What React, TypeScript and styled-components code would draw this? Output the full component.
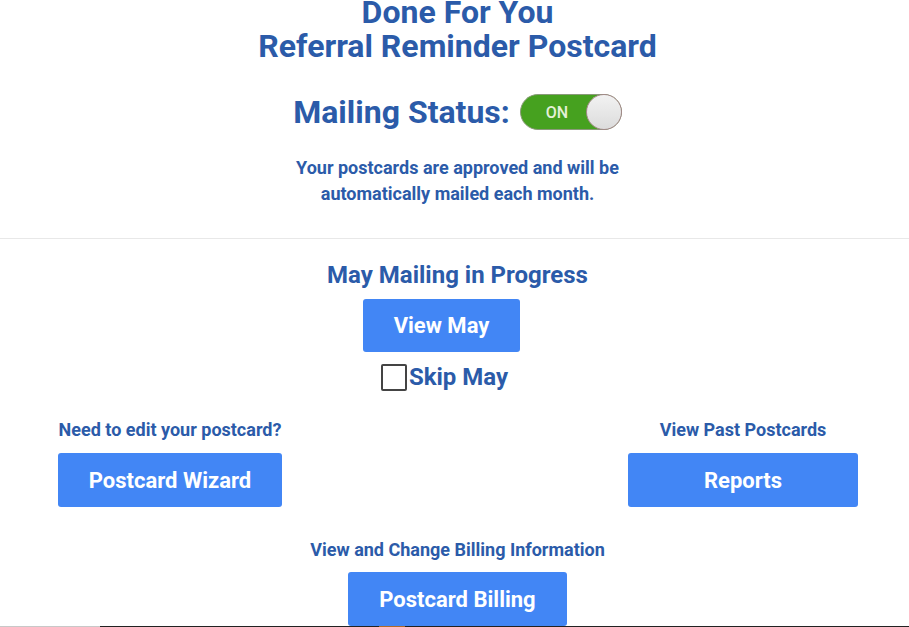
import styled, { createGlobalStyle } from "styled-components";

const GlobalStyle = createGlobalStyle`
  html, body {
    margin: 0;
    padding: 0;
    background: #ffffff;
  }
  body {
    font-family: Roboto, "Liberation Sans", Arial, sans-serif;
    overflow: hidden;
  }
`;

const Page = styled.div`
  width: 909px;
  height: 627px;
  display: flex;
  flex-direction: column;
  overflow: hidden;
  color: #2b5ba9;
`;

const Header = styled.div`
  display: flex;
  flex-direction: column;
  align-items: center;
  padding-left: 6px;
`;

const Title = styled.h1`
  margin: -5px 0 0;
  font-size: 32px;
  line-height: 34px;
  font-weight: 700;
  text-align: center;
`;

const StatusRow = styled.div`
  display: flex;
  align-items: center;
  gap: 10px;
  height: 38px;
  margin-top: 30px;
`;

const StatusLabel = styled.span`
  font-size: 32px;
  font-weight: 700;
`;

const Toggle = styled.div<{ $on: boolean }>`
  position: relative;
  width: 102px;
  height: 36px;
  box-sizing: border-box;
  border-radius: 18px;
  border: 1px solid #8a9a7a;
  background: ${(p) => (p.$on ? "#46a11f" : "#bbbbbb")};
  display: flex;
  align-items: center;
  padding-left: 25px;
  color: #e4f0d8;
  font-size: 16px;
  font-weight: 500;
`;

const Knob = styled.span`
  position: absolute;
  right: -1px;
  top: -1px;
  width: 36px;
  height: 36px;
  box-sizing: border-box;
  border-radius: 50%;
  border: 1px solid #a48a8a;
  background: linear-gradient(#f2f2f2, #dcdcdc);
`;

const Note = styled.p`
  margin: 24px 0 0;
  font-size: 18px;
  line-height: 26px;
  font-weight: 700;
  text-align: center;
`;

const Divider = styled.hr`
  width: 100%;
  margin: 31px 0 0;
  border: 0;
  border-top: 1px solid #e8e8e8;
`;

const Section = styled.div`
  display: flex;
  flex-direction: column;
  align-items: center;
  padding-left: 6px;
`;

const SectionTitle = styled.h2`
  margin: 22px 0 10px;
  font-size: 24px;
  line-height: 28px;
  font-weight: 700;
`;

const Button = styled.button<{ $width?: number; $height?: number; $shift?: number }>`
  box-sizing: border-box;
  height: ${(p) => p.$height ?? 54}px;
  ${(p) => (p.$width ? `width: ${p.$width}px;` : "padding: 0 31px;")}
  margin-right: ${(p) => (p.$shift ?? 0) * 2}px;
  border: 0;
  border-radius: 3px;
  background: #4286f5;
  color: #ffffff;
  font-family: Roboto, "Liberation Sans", Arial, sans-serif;
  font-size: 22px;
  font-weight: 700;
  cursor: pointer;
`;

const SkipLabel = styled.label`
  display: flex;
  align-items: center;
  gap: 2px;
  height: 28px;
  margin-top: 11px;
  margin-right: 26px;
  font-size: 24px;
  font-weight: 700;
`;

const Box = styled.span`
  width: 26px;
  height: 27px;
  box-sizing: border-box;
  border: 2px solid #444444;
  border-radius: 2px;
  background: #ffffff;
`;

const Columns = styled.div`
  display: grid;
  grid-template-columns: 340px 1fr 332px;
  margin-top: 27px;
`;

const Column = styled.div`
  display: flex;
  flex-direction: column;
  align-items: center;
`;

const Caption = styled.div<{ $gap?: number }>`
  font-size: 18px;
  line-height: 24px;
  font-weight: 700;
  margin-bottom: ${(p) => p.$gap ?? 11}px;
`;

const Billing = styled.div`
  display: flex;
  flex-direction: column;
  align-items: center;
  margin-top: 31px;
  padding-left: 6px;
`;

const Strip = styled.div`
  margin-top: auto;
  height: 1px;
  display: flex;
`;

const StripPart = styled.span<{ $w: number; $c: string }>`
  width: ${(p) => p.$w}px;
  background: ${(p) => p.$c};
`;

export default function App() {
  return (
    <Page>
      <GlobalStyle />
      <Header>
        <Title>
          Done For You
          <br />
          Referral Reminder Postcard
        </Title>
        <StatusRow>
          <StatusLabel>Mailing Status:</StatusLabel>
          <Toggle $on>
            ON
            <Knob />
          </Toggle>
        </StatusRow>
        <Note>
          Your postcards are approved and will be
          <br />
          automatically mailed each month.
        </Note>
      </Header>
      <Divider />
      <Section>
        <SectionTitle>May Mailing in Progress</SectionTitle>
        <Button $height={53} $shift={16}>
          View May
        </Button>
        <SkipLabel>
          <Box />
          Skip May
        </SkipLabel>
      </Section>
      <Columns>
        <Column>
          <Caption>Need to edit your postcard?</Caption>
          <Button>Postcard Wizard</Button>
        </Column>
        <div />
        <Column>
          <Caption>View Past Postcards</Caption>
          <Button $width={230}>Reports</Button>
        </Column>
      </Columns>
      <Billing>
        <Caption $gap={10}>View and Change Billing Information</Caption>
        <Button>Postcard Billing</Button>
      </Billing>
      <Strip>
        <StripPart $w={100} $c="#c8c8c8" />
        <StripPart $w={279} $c="#222222" />
        <StripPart $w={26} $c="#b06a2a" />
        <StripPart $w={504} $c="#222222" />
      </Strip>
    </Page>
  );
}
